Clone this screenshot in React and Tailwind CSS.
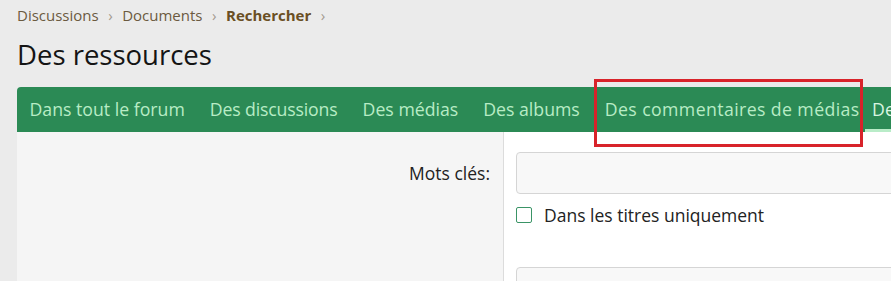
export default function App() {
  const tabs = [
    { t: "Dans tout le forum", c: "" },
    { t: "Des discussions", c: "tracking-[-0.15px]" },
    { t: "Des médias", c: "" },
    { t: "Des albums", c: "" },
    { t: "Des commentaires de médias", c: "tracking-[0.4px]" },
  ];
  return (
    <div
      className="relative h-[281px] w-[891px] overflow-hidden bg-[#ebebeb]"
      style={{ fontFamily: '"Open Sans", "Noto Sans", sans-serif' }}
    >
      <div className="pl-[17px]">
        <div className="flex h-[30px] items-center whitespace-nowrap text-[15px] text-[#6b5a3f]">
          <span>Discussions</span>
          <span className="mx-[9.5px] text-[15px] text-[#a39a8e]">›</span>
          <span>Documents</span>
          <span className="mx-[9.5px] text-[15px] text-[#a39a8e]">›</span>
          <span className="font-bold text-[#6a4f24]">Rechercher</span>
          <span className="mx-[9.5px] text-[15px] text-[#a39a8e]">›</span>
        </div>
        <h1 className="mt-[5px] h-[40px] whitespace-nowrap text-[27.5px] leading-[40px] text-[#141414]">
          Des ressources
        </h1>
        <div className="mt-[12px] w-[1000px]">
          <div className="flex h-[45px] items-stretch overflow-hidden rounded-tl-[4px] bg-[#2b8a55] whitespace-nowrap">
            {tabs.map((x) => (
              <div
                key={x.t}
                className={`flex items-center px-[12.5px] text-[17.7px] text-[#b8ecc5] ${x.c}`}
              >
                {x.t}
              </div>
            ))}
            <div className="-ml-[7px] flex items-center border-b-[3px] border-[#b9ecc8] pl-[7px] pr-[12.5px] pt-[3px] text-[17.7px] text-[#d8f5e0]">
              Des ressources
            </div>
          </div>
          <div className="flex h-[200px]">
            <div className="w-[487px] shrink-0 border-r border-[#dcdcdc] bg-[#f5f5f5] pr-[13px] pt-[28px] text-right text-[17.5px] text-[#222]">
              Mots clés:
            </div>
            <div className="flex-1 bg-white pl-[12px] pt-[20px]">
              <div className="h-[42px] rounded-[4px] border border-[#d5d5d5] bg-[#f8f8f8]" />
              <label className="mt-[8px] flex items-center text-[17.5px] text-[#222]">
                <span className="h-[16px] w-[16px] rounded-[2px] border-[1.5px] border-[#3a9466] bg-white" />
                <span className="ml-[12px]">Dans les titres uniquement</span>
              </label>
              <div className="mt-[39px] h-[42px] rounded-[4px] border border-[#d5d5d5] bg-[#f8f8f8]" />
            </div>
          </div>
        </div>
      </div>
      <div className="absolute left-[594px] top-[79px] h-[68px] w-[269px] border-[3px] border-[#d8232a]" />
    </div>
  );
}
